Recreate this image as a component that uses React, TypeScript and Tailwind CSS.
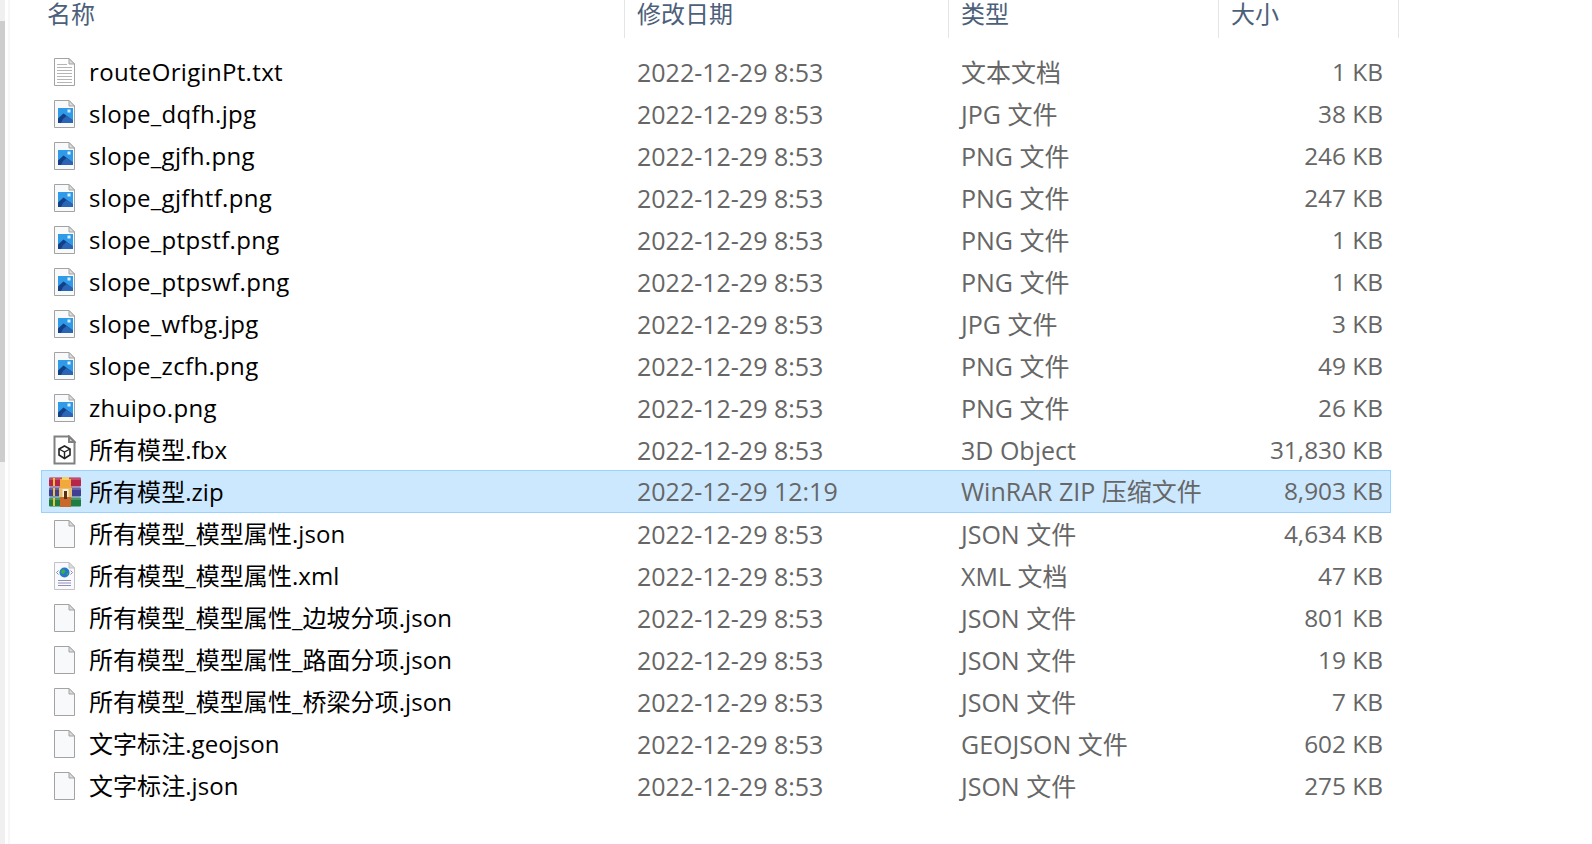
import type { ReactNode } from "react";

type FileKind = "txt" | "image" | "model" | "zip" | "blank" | "xml";

interface FileRow {
  name: string;
  date: string;
  type: string;
  size: string;
  kind: FileKind;
  selected?: boolean;
}

const files: FileRow[] = [
  { name: "routeOriginPt.txt", date: "2022-12-29 8:53", type: "文本文档", size: "1 KB", kind: "txt" },
  { name: "slope_dqfh.jpg", date: "2022-12-29 8:53", type: "JPG 文件", size: "38 KB", kind: "image" },
  { name: "slope_gjfh.png", date: "2022-12-29 8:53", type: "PNG 文件", size: "246 KB", kind: "image" },
  { name: "slope_gjfhtf.png", date: "2022-12-29 8:53", type: "PNG 文件", size: "247 KB", kind: "image" },
  { name: "slope_ptpstf.png", date: "2022-12-29 8:53", type: "PNG 文件", size: "1 KB", kind: "image" },
  { name: "slope_ptpswf.png", date: "2022-12-29 8:53", type: "PNG 文件", size: "1 KB", kind: "image" },
  { name: "slope_wfbg.jpg", date: "2022-12-29 8:53", type: "JPG 文件", size: "3 KB", kind: "image" },
  { name: "slope_zcfh.png", date: "2022-12-29 8:53", type: "PNG 文件", size: "49 KB", kind: "image" },
  { name: "zhuipo.png", date: "2022-12-29 8:53", type: "PNG 文件", size: "26 KB", kind: "image" },
  { name: "所有模型.fbx", date: "2022-12-29 8:53", type: "3D Object", size: "31,830 KB", kind: "model" },
  { name: "所有模型.zip", date: "2022-12-29 12:19", type: "WinRAR ZIP 压缩文件", size: "8,903 KB", kind: "zip", selected: true },
  { name: "所有模型_模型属性.json", date: "2022-12-29 8:53", type: "JSON 文件", size: "4,634 KB", kind: "blank" },
  { name: "所有模型_模型属性.xml", date: "2022-12-29 8:53", type: "XML 文档", size: "47 KB", kind: "xml" },
  { name: "所有模型_模型属性_边坡分项.json", date: "2022-12-29 8:53", type: "JSON 文件", size: "801 KB", kind: "blank" },
  { name: "所有模型_模型属性_路面分项.json", date: "2022-12-29 8:53", type: "JSON 文件", size: "19 KB", kind: "blank" },
  { name: "所有模型_模型属性_桥梁分项.json", date: "2022-12-29 8:53", type: "JSON 文件", size: "7 KB", kind: "blank" },
  { name: "文字标注.geojson", date: "2022-12-29 8:53", type: "GEOJSON 文件", size: "602 KB", kind: "blank" },
  { name: "文字标注.json", date: "2022-12-29 8:53", type: "JSON 文件", size: "275 KB", kind: "blank" },
];

function Page({ children, stroke = "#a3a3a3", strokeWidth = 1, fill = "#f8f9fb" }: { children?: ReactNode; stroke?: string; strokeWidth?: number; fill?: string }) {
  return (
    <svg width="24" height="30" viewBox="0 0 24 30" className="shrink-0">
      <path d="M2.5 1.5H17L22.5 7V28.5H2.5Z" fill={fill} stroke={stroke} strokeWidth={strokeWidth} />
      <path d="M17 1.5V7H22.5Z" fill="#dcdcdc" stroke={stroke} strokeWidth={strokeWidth} />
      {children}
    </svg>
  );
}

function FileIcon({ kind }: { kind: FileKind }) {
  if (kind === "txt") {
    return (
      <Page fill="#ffffff">
        <path d="M5 7.5H15M5 10.5H20M5 13.5H20M5 16.5H20M5 19.5H20M5 22.5H20M5 25.5H20" stroke="#b5b5b5" strokeWidth="1" />
      </Page>
    );
  }
  if (kind === "image") {
    return (
      <Page>
        <rect x="6" y="9" width="15" height="15" fill="#2f9be8" />
        <rect x="15.5" y="10.5" width="3" height="3" fill="#d9efff" />
        <path d="M6 24V19.5L11.5 14.5L21 21.5V24Z" fill="#123f86" />
        <path d="M11 20L14.5 17L21 21V24H9Z" fill="#2a66b5" />
      </Page>
    );
  }
  if (kind === "model") {
    return (
      <Page stroke="#808080" strokeWidth={2} fill="#ffffff">
        <path d="M12.5 11L18 14V20L12.5 23.5L7 20V14Z" fill="none" stroke="#222222" strokeWidth="1.6" />
        <path d="M7 14L12.5 17L18 14M12.5 17V23.5" fill="none" stroke="#222222" strokeWidth="1.4" />
      </Page>
    );
  }
  if (kind === "xml") {
    return (
      <Page stroke="#c2c2c2" fill="#f9f9ff">
        <circle cx="12.5" cy="11.5" r="5" fill="#2477d1" />
        <path d="M9.5 9L12 8L13.5 10.5L11.5 13L9 12ZM14 13L16.5 11.5L16 14.5Z" fill="#3fae3a" />
        <path d="M6.5 9.5L4.5 11.5L6.5 13.5M18.5 9.5L20.5 11.5L18.5 13.5" fill="none" stroke="#8a8a9a" strokeWidth="1" />
        <path d="M6 19.5H19M6 22H19M6 24.5H19" stroke="#8f8fb0" strokeWidth="1" />
      </Page>
    );
  }
  if (kind === "zip") {
    return (
      <svg width="32" height="30" viewBox="0 0 32 30" className="ml-[2px] shrink-0">
        <rect x="0" y="0.5" width="32" height="9" rx="1" fill="#b5264a" />
        <rect x="0" y="10.5" width="32" height="9" rx="1" fill="#3f3f94" />
        <rect x="0" y="20.5" width="32" height="9" rx="1" fill="#1f7d3f" />
        <path d="M0 2H32M0 12H32M0 22H32" stroke="#ffffff" strokeOpacity="0.25" strokeWidth="1.5" />
        <path d="M5 1V9M5 11V19M5 21V29" stroke="#f2c23c" strokeWidth="2" />
        <rect x="11" y="20" width="11" height="10" fill="#c9682a" />
        <rect x="11" y="2" width="11" height="9" fill="#f0a93a" />
        <rect x="13" y="0" width="7" height="3" fill="#f7cf6a" />
        <rect x="10" y="11" width="13" height="9" fill="#e9bd6a" />
        <rect x="13.5" y="12" width="6" height="8" fill="#f8f0dc" />
        <rect x="15" y="14" width="3" height="8" fill="#5a2e10" />
      </svg>
    );
  }
  return <Page />;
}

export default function App() {
  return (
    <div
      className="flex h-[844px] w-[1592px] overflow-hidden bg-white text-[25px] leading-none"
      style={{ fontFamily: '"Open Sans", "Noto Sans CJK SC", sans-serif' }}
    >
      {/* left edge: window scrollbar sliver */}
      <div className="flex w-[5px] shrink-0 flex-col bg-[#f0f0f0]">
        <div className="h-[21px]" />
        <div className="h-[441px] bg-[#cdcdcd]" />
      </div>
      <div className="w-[3px] shrink-0 bg-white" />
      <div className="w-[2px] shrink-0 bg-[#f7f7f7]" />

      <main className="w-[1390px] pl-[31px]">
        <div className="flex h-[38px] text-[24px] text-[#4c607a]">
          <div className="w-[583px] pl-[6px] pt-[2px]">名称</div>
          <div className="w-[324px] border-l border-[#e5e5e5] pl-[12px] pt-[2px]">修改日期</div>
          <div className="w-[270px] border-l border-[#e5e5e5] pl-[12px] pt-[2px]">类型</div>
          <div className="w-[181px] border-x border-[#e5e5e5] pl-[12px] pt-[2px]">大小</div>
        </div>
        <div className="pt-[13px]">
          {files.map((f) => (
            <div
              key={f.name}
              className={`flex w-[1350px] items-center border ${
                f.selected ? "-mt-px h-[43px] border-[#99d1ff] bg-[#cce8ff]" : "h-[42px] border-transparent"
              }`}
            >
              <div className="flex w-[582px] items-center text-[24px] text-black">
                <div className="flex w-[47px] justify-center pr-[4px]">
                  <FileIcon kind={f.kind} />
                </div>
                <span className={`whitespace-nowrap ${/^[a-z]/.test(f.name) ? "tracking-[0.33px]" : "tracking-[0.05px]"}`}>
                  {f.name}
                </span>
              </div>
              <div className="w-[324px] whitespace-nowrap pl-[13px] text-[#666666]">{f.date}</div>
              <div className="w-[270px] whitespace-nowrap pl-[13px] text-[#666666]">{f.type}</div>
              <div className="w-[172px] whitespace-nowrap pr-[7px] text-right text-[24.4px] text-[#666666]">{f.size}</div>
            </div>
          ))}
        </div>
      </main>
    </div>
  );
}
